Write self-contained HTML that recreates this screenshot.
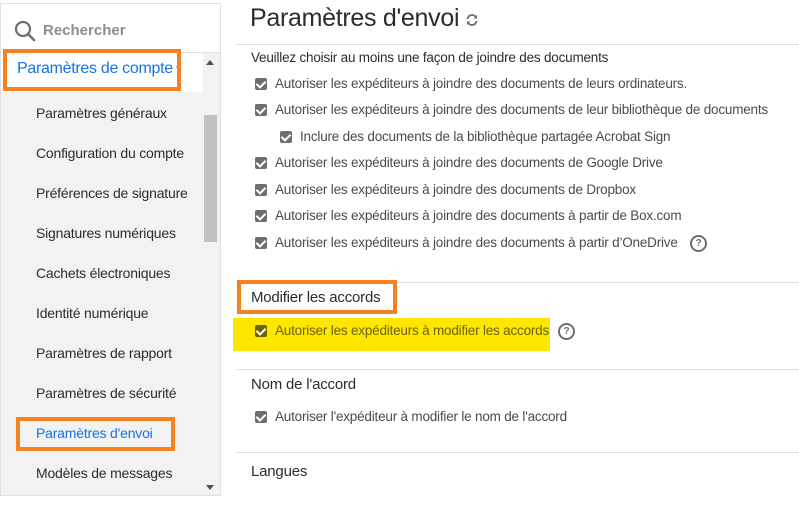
<!DOCTYPE html>
<html><head><meta charset="utf-8"><style>
*{margin:0;padding:0;box-sizing:border-box}
body{width:799px;height:508px;background:#fff;font-family:"Liberation Sans",sans-serif;color:#2c2c2c;position:relative;overflow:hidden}
.a{position:absolute;white-space:nowrap}
.side{position:absolute;left:0;top:3px;width:221px;height:493px;border:1px solid #e1e1e1;background:#fff}
.list{position:absolute;left:1px;top:92px;width:202px;height:403px;background:#f2f2f2}
.sb{position:absolute;left:203px;top:53px;width:17px;height:442px;background:#f2f2f2}
.thumb{position:absolute;left:204px;top:115px;width:13px;height:127px;background:#c1c1c1}
.item{position:absolute;left:36px;font-size:14px;letter-spacing:-0.2px;color:#2c2c2c}
.box{position:absolute;border:4px solid #f68121}
.cb{position:absolute;width:12px;height:12px;background:#6e6e6e;border-radius:2px}
.cb:after{content:"";position:absolute;left:3px;top:1px;width:4px;height:7px;border:solid #fff;border-width:0 2px 2px 0;transform:rotate(45deg)}
.t{position:absolute;font-size:13.5px;letter-spacing:-0.2px;color:#4b4b4b;white-space:nowrap}
.h{position:absolute;font-size:15px;letter-spacing:-0.2px;color:#2c2c2c}
.line{position:absolute;left:236px;width:563px;height:1px;background:#e1e1e1}
.q{position:absolute;width:17px;height:17px;border:2px solid #6e6e6e;border-radius:50%;font-size:10px;font-weight:bold;color:#6e6e6e;text-align:center;line-height:13px}
</style></head><body>
<div class="side"></div>
<svg class="a" style="left:14px;top:20px" width="22" height="22" viewBox="0 0 22 22"><circle cx="9" cy="9" r="7" fill="none" stroke="#6e6e6e" stroke-width="2.2"/><path d="M14 14l6 6" stroke="#6e6e6e" stroke-width="2.5" stroke-linecap="round"/></svg>
<div class="a" style="left:43px;top:22px;font-size:15px;font-weight:bold;color:#8e8e8e">Rechercher</div>
<div class="a" style="left:1px;top:52px;width:219px;height:1px;background:#e1e1e1"></div>
<div class="a" style="left:17px;top:60px;font-size:16px;color:#1473e6;letter-spacing:-0.3px">Paramètres de compte</div>
<div class="a" style="left:176px;top:63px;font-size:10px;color:#1473e6">^</div>
<div class="list"></div>
<div class="sb"></div><div class="thumb"></div>
<div class="a" style="left:206px;top:60px;width:0;height:0;border-left:4px solid transparent;border-right:4px solid transparent;border-bottom:5px solid #505050"></div>
<div class="a" style="left:206px;top:485px;width:0;height:0;border-left:4px solid transparent;border-right:4px solid transparent;border-top:5px solid #505050"></div>
<div class="item" style="top:105px">Paramètres généraux</div>
<div class="item" style="top:145px">Configuration du compte</div>
<div class="item" style="top:185px">Préférences de signature</div>
<div class="item" style="top:225px">Signatures numériques</div>
<div class="item" style="top:265px">Cachets électroniques</div>
<div class="item" style="top:305px">Identité numérique</div>
<div class="item" style="top:345px">Paramètres de rapport</div>
<div class="item" style="top:385px">Paramètres de sécurité</div>
<div class="item" style="top:425px;color:#1473e6">Paramètres d'envoi</div>
<div class="item" style="top:465px">Modèles de messages</div>
<div class="box" style="left:3px;top:49px;width:178px;height:42px"></div>
<div class="box" style="left:16px;top:417px;width:159px;height:34px"></div>

<div class="a" style="left:250px;top:4px;font-size:25px;color:#2c2c2c;letter-spacing:-0.3px">Paramètres d'envoi</div>
<svg class="a" style="left:465px;top:13px" width="14" height="14" viewBox="0 0 14 14"><path d="M2.5 6a4.5 4.5 0 0 1 8.5-1.5M11.5 8a4.5 4.5 0 0 1-8.5 1.5" fill="none" stroke="#6e6e6e" stroke-width="1.8"/><path d="M12 2v3.5H8.5z" fill="#6e6e6e"/><path d="M2 12V8.5h3.5z" fill="#6e6e6e"/></svg>
<div class="line" style="top:44px"></div>
<div class="t" style="left:251px;top:50px;color:#2c2c2c">Veuillez choisir au moins une façon de joindre des documents</div>
<div class="cb" style="left:255px;top:78px"></div><div class="t" style="left:275px;top:76px">Autoriser les expéditeurs à joindre des documents de leurs ordinateurs.</div>
<div class="cb" style="left:255px;top:104px"></div><div class="t" style="left:275px;top:102px">Autoriser les expéditeurs à joindre des documents de leur bibliothèque de documents</div>
<div class="cb" style="left:280px;top:131px"></div><div class="t" style="left:300px;top:129px">Inclure des documents de la bibliothèque partagée Acrobat Sign</div>
<div class="cb" style="left:255px;top:157px"></div><div class="t" style="left:275px;top:155px">Autoriser les expéditeurs à joindre des documents de Google Drive</div>
<div class="cb" style="left:255px;top:184px"></div><div class="t" style="left:275px;top:182px">Autoriser les expéditeurs à joindre des documents de Dropbox</div>
<div class="cb" style="left:255px;top:210px"></div><div class="t" style="left:275px;top:208px">Autoriser les expéditeurs à joindre des documents à partir de Box.com</div>
<div class="cb" style="left:255px;top:237px"></div><div class="t" style="left:275px;top:235px">Autoriser les expéditeurs à joindre des documents à partir d’OneDrive</div>
<div class="q" style="left:690px;top:235px">?</div>
<div class="line" style="top:282px"></div>
<div class="h" style="left:251px;top:289px">Modifier les accords</div>
<div class="box" style="left:237px;top:280px;width:160px;height:34px"></div>
<div class="a" style="left:233px;top:318px;width:317px;height:33px;background:#ffe600"></div>
<div class="cb" style="left:255px;top:325px;background:#6b6400"></div><div class="t" style="left:275px;top:323px;color:#6b6400">Autoriser les expéditeurs à modifier les accords</div>
<div class="q" style="left:558px;top:323px">?</div>
<div class="line" style="top:369px"></div>
<div class="h" style="left:251px;top:376px">Nom de l'accord</div>
<div class="cb" style="left:255px;top:411px"></div><div class="t" style="left:275px;top:409px">Autoriser l'expéditeur à modifier le nom de l'accord</div>
<div class="line" style="top:452px"></div>
<div class="h" style="left:251px;top:463px">Langues</div>
</body></html>
